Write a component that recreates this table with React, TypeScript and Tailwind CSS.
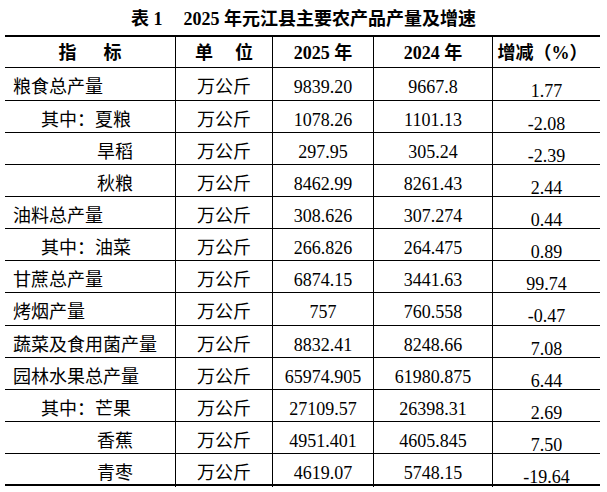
import React from 'react';

type Row = {
  name: string;
  level: 0 | 1 | 2;
  y2025: string;
  y2024: string;
  change: string;
  h: string;
};

const rows: Row[] = [
  { name: '粮食总产量', level: 0, y2025: '9839.20', y2024: '9667.8', change: '1.77', h: 'h-[33px] border-b' },
  { name: '其中：夏粮', level: 1, y2025: '1078.26', y2024: '1101.13', change: '-2.08', h: 'h-[32px] border-b' },
  { name: '旱稻', level: 2, y2025: '297.95', y2024: '305.24', change: '-2.39', h: 'h-[32px] border-b' },
  { name: '秋粮', level: 2, y2025: '8462.99', y2024: '8261.43', change: '2.44', h: 'h-[32px] border-b' },
  { name: '油料总产量', level: 0, y2025: '308.626', y2024: '307.274', change: '0.44', h: 'h-[32px] border-b' },
  { name: '其中：油菜', level: 1, y2025: '266.826', y2024: '264.475', change: '0.89', h: 'h-[32px] border-b' },
  { name: '甘蔗总产量', level: 0, y2025: '6874.15', y2024: '3441.63', change: '99.74', h: 'h-[32px] border-b' },
  { name: '烤烟产量', level: 0, y2025: '757', y2024: '760.558', change: '-0.47', h: 'h-[33px] border-b' },
  { name: '蔬菜及食用菌产量', level: 0, y2025: '8832.41', y2024: '8248.66', change: '7.08', h: 'h-[32px] border-b' },
  { name: '园林水果总产量', level: 0, y2025: '65974.905', y2024: '61980.875', change: '6.44', h: 'h-[32px] border-b' },
  { name: '其中：芒果', level: 1, y2025: '27109.57', y2024: '26398.31', change: '2.69', h: 'h-[32px] border-b' },
  { name: '香蕉', level: 2, y2025: '4951.401', y2024: '4605.845', change: '7.50', h: 'h-[32px] border-b' },
  { name: '青枣', level: 2, y2025: '4619.07', y2024: '5748.15', change: '-19.64', h: 'h-[30px]' },
];

const indent = (level: Row['level']) => {
  switch (level) {
    case 1: return 'pl-[36px]';
    case 2: return 'pl-[92px]';
    default: return 'pl-[8px]';
  }
};

const cell = 'flex items-center justify-center border-r border-black pt-[4px]';

const App: React.FC = () => {
  return (
    <div className="w-[607px] h-[492px] bg-white text-black font-['Liberation_Serif','Noto_Sans_CJK_SC',serif] text-[18px] leading-[20px]">
      <div className="h-[35px] flex items-center justify-center pt-[2px] font-bold">
        <span>表 1</span>
        <span className="ml-[21px]">2025 年元江县主要农产品产量及增速</span>
      </div>

      <div className="ml-[5px] w-[595px] border-t-2 border-b-2 border-black">
        <div className="grid grid-cols-[171px_97px_101px_119px_107px] h-[31px] border-b border-black font-bold">
          <div className="flex items-center justify-center gap-[27px] border-r border-black pt-[1px]">
            <span>指</span>
            <span>标</span>
          </div>
          <div className="flex items-center justify-center gap-[22px] border-r border-black pt-[1px]">
            <span>单</span>
            <span>位</span>
          </div>
          <div className="flex items-center justify-center border-r border-black pt-[1px]">2025 年</div>
          <div className="flex items-center justify-center border-r border-black pt-[1px]">2024 年</div>
          <div className="flex items-center justify-center pt-[1px] pr-[8px]">增减（%）</div>
        </div>

        {rows.map((r) => (
          <div
            key={r.name}
            className={`grid grid-cols-[171px_97px_101px_119px_107px] border-black ${r.h}`}
          >
            <div className={`flex items-center border-r border-black pt-[4px] ${indent(r.level)}`}>
              {r.name}
            </div>
            <div className={cell}>万公斤</div>
            <div className={cell}>{r.y2025}</div>
            <div className={cell}>{r.y2024}</div>
            <div className="flex items-center justify-center pt-[13px]">{r.change}</div>
          </div>
        ))}
      </div>
    </div>
  );
};

export default App;
